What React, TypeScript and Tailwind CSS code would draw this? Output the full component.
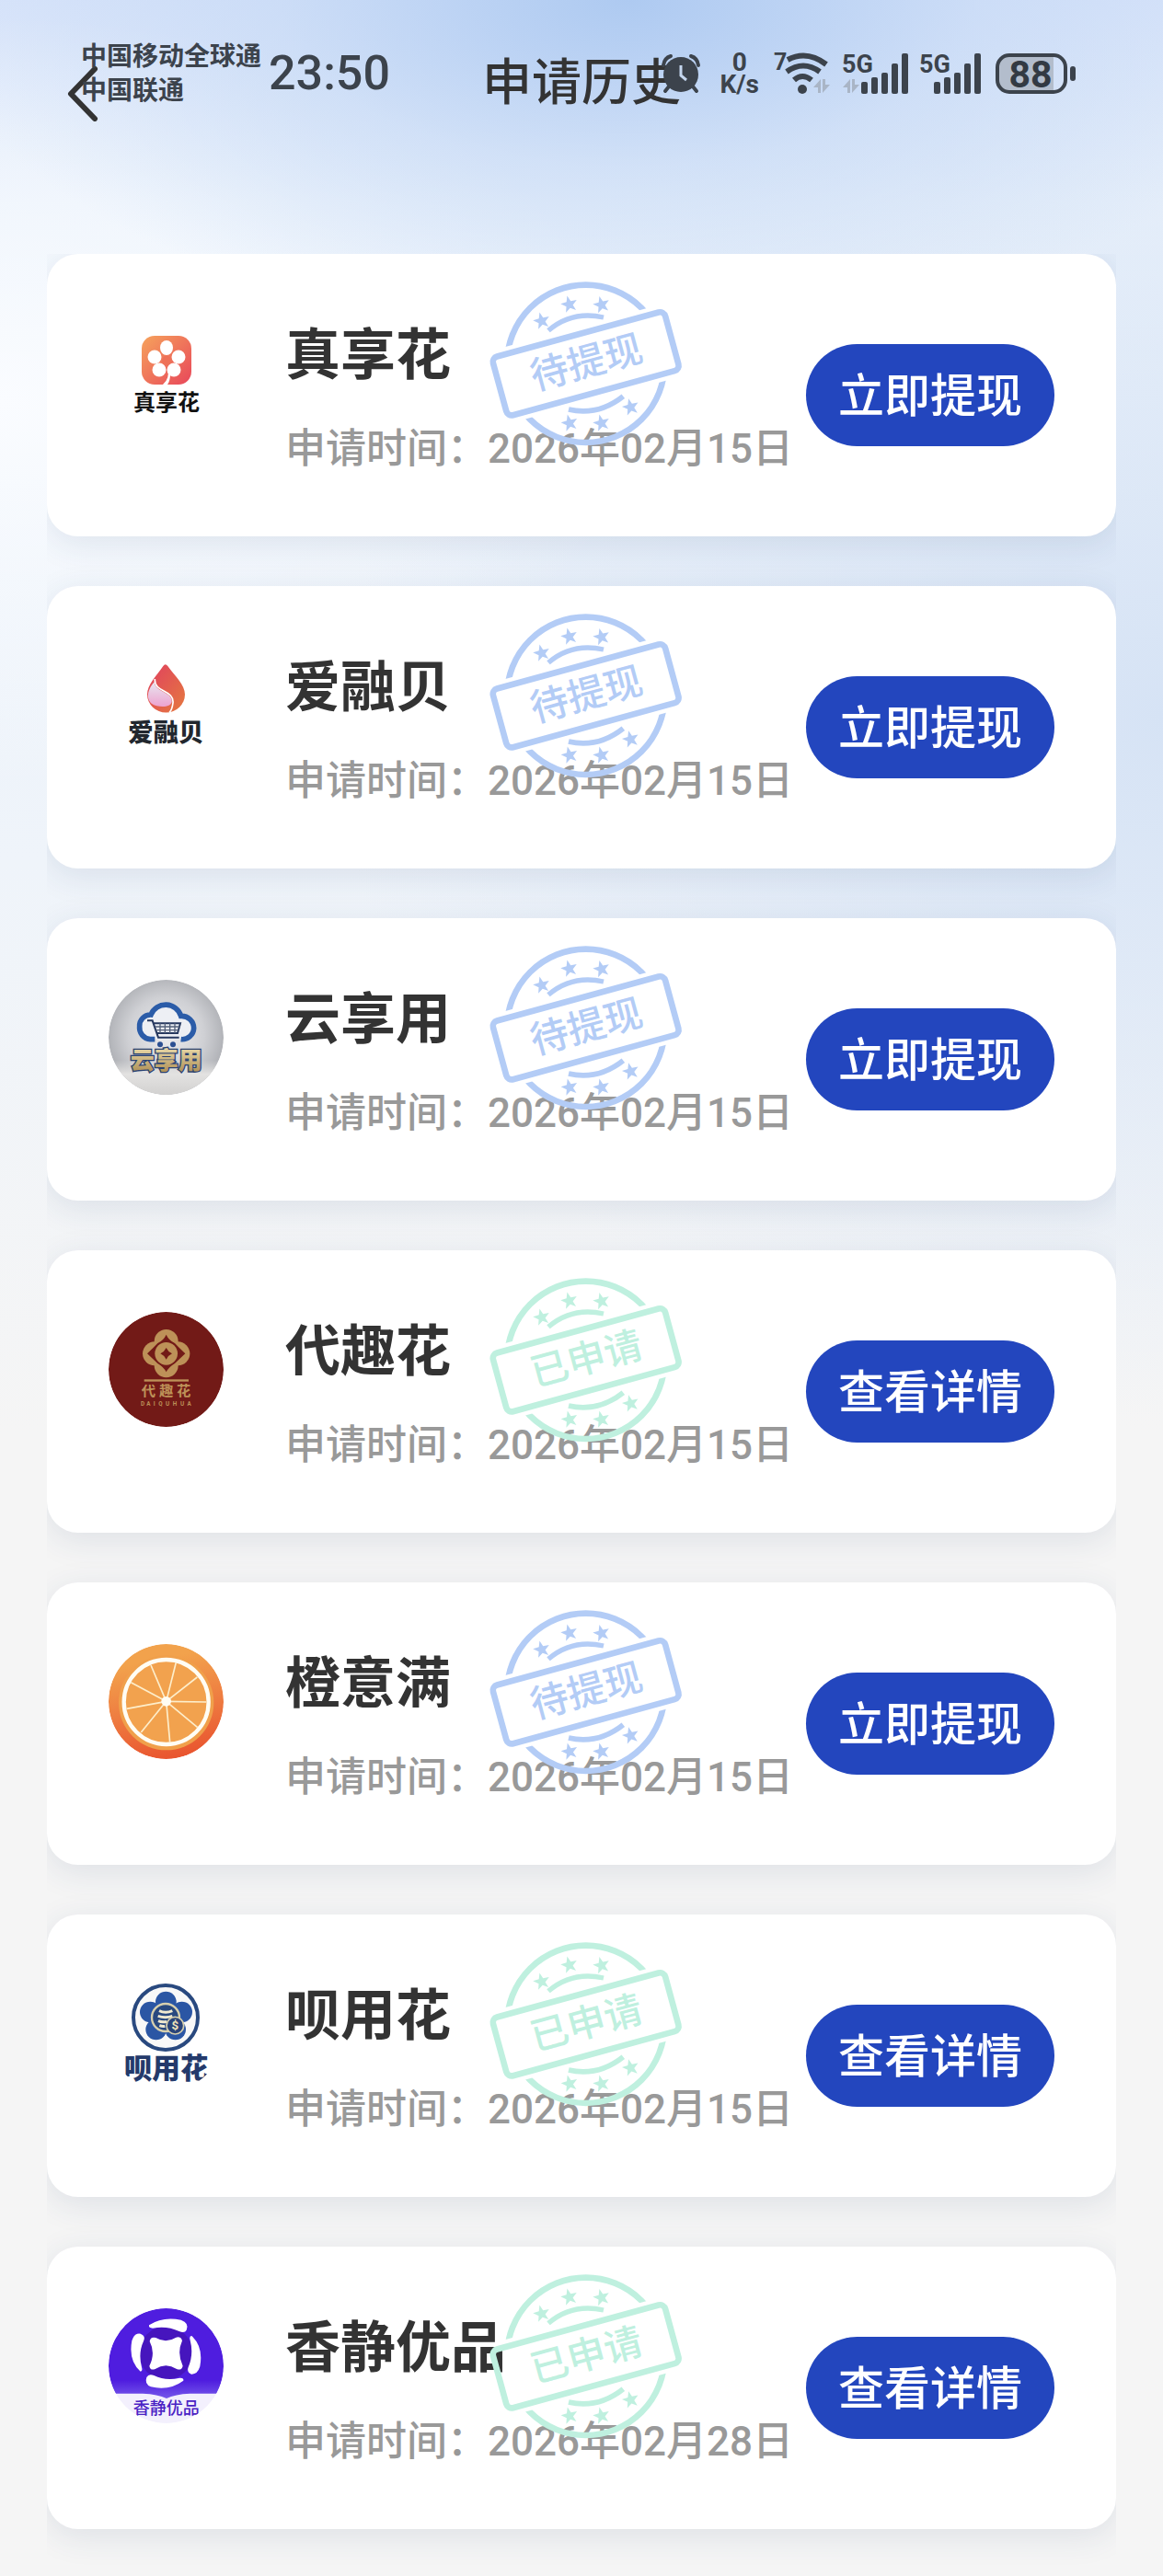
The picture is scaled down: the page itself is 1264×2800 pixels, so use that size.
import type { ReactNode } from "react";

type Status = "pending" | "applied";

type Item = {
  name: string;
  date: string;
  status: Status;
  logo: ReactNode;
};

const STATUS = {
  pending: { label: "待提现", action: "立即提现", color: "text-[#b3ccf6]" },
  applied: { label: "已申请", action: "查看详情", color: "text-[#bff0df]" },
};

const STAR = "M0-28 7-9 27-8 11 5 17 24 0 13-17 24-11 5-27-8-7-9Z";
const STARS = [
  [266, 184],
  [356, 130],
  [461, 131],
  [556, 465],
  [461, 517],
  [357, 517],
];

function Stamp({ status }: { status: Status }) {
  const { label, color } = STATUS[status];
  const maskId = `gap-${status}`;
  return (
    <svg
      viewBox="90 50 639 549"
      className={`pointer-events-none absolute left-[479px] top-7 h-[183px] w-[213px] ${color}`}
    >
      <mask id={maskId} maskUnits="userSpaceOnUse" x="90" y="50" width="640" height="550">
        <rect x="90" y="50" width="640" height="550" fill="white" />
        <rect x="90" y="202" width="640" height="244" fill="black" transform="rotate(-15.3 410 324)" />
      </mask>
      <g fill="none" stroke="currentColor" strokeWidth="20">
        <circle cx="410" cy="324" r="257" mask={`url(#${maskId})`} />
        <rect x="119" y="225" width="582" height="198" rx="18" transform="rotate(-15.3 410 324)" />
        <path d="M288 216Q365 150 468 173" strokeWidth="16" />
        <path d="M354 473Q450 495 532 430" strokeWidth="17" />
      </g>
      {STARS.map(([x, y]) => (
        <path key={`${x}-${y}`} d={STAR} fill="currentColor" transform={`translate(${x} ${y}) rotate(-14)`} />
      ))}
      <text
        x="412"
        y="363"
        textAnchor="middle"
        fontSize="124"
        fontWeight="500"
        fill="currentColor"
        transform="rotate(-15.3 412 320)"
      >
        {label}
      </text>
    </svg>
  );
}

function ZhenxianghuaLogo() {
  return (
    <svg viewBox="0 0 125 125" className="size-full">
      <defs>
        <linearGradient id="zxh" x1="0" y1="0" x2="1" y2="1">
          <stop offset="0" stopColor="#f6a35c" />
          <stop offset="1" stopColor="#e8475a" />
        </linearGradient>
      </defs>
      <rect x="36" y="22" width="54" height="53" rx="14" fill="url(#zxh)" />
      <g fill="white">
        <ellipse cx="63" cy="35" rx="7" ry="8" />
        <circle cx="50" cy="45" r="7.500" />
        <circle cx="76" cy="45" r="7.500" />
        <circle cx="55" cy="59" r="7.500" />
        <circle cx="71" cy="59" r="7.500" />
        <path d="M64 58Q67 68 59 75H64Q67 71 67 64Z" />
      </g>
      <circle cx="63" cy="49" r="5" fill="#ee7157" />
      <text x="63" y="103" textAnchor="middle" fontSize="24" fontWeight="700" fill="#111">
        真享花
      </text>
    </svg>
  );
}

function AirongbeiLogo() {
  return (
    <svg viewBox="54 44 375 375" className="size-full">
      <defs>
        <linearGradient id="arb" x1="0" y1="0" x2="1" y2="1">
          <stop offset="0" stopColor="#e0405f" />
          <stop offset="1" stopColor="#e5793f" />
        </linearGradient>
        <linearGradient id="arb-in" x1="0" y1="0" x2="0" y2="1">
          <stop offset="0" stopColor="#e8e6f0" />
          <stop offset="1" stopColor="#eda3cf" />
        </linearGradient>
      </defs>
      <path d="M232 104Q239 94 247 104C272 138 303 166 303 196A61 59 0 0 1 180 196C180 166 208 138 232 104Z" fill="url(#arb)" />
      <path d="M205 146C202 192 268 180 264 224C262 240 258 250 252 256" fill="none" stroke="white" strokeWidth="5" />
      <path d="M203 156C206 190 262 188 260 220C258 240 215 240 194 226C174 208 183 178 203 156Z" fill="url(#arb-in)" />
      <text x="241" y="350" textAnchor="middle" fontSize="82" fontWeight="900" fill="#22272e">
        爱融贝
      </text>
    </svg>
  );
}

function YunxiangyongLogo() {
  return (
    <svg viewBox="54 48 375 375" className="size-full">
      <defs>
        <radialGradient id="yxy" cx="0.5" cy="0.48" r="0.55">
          <stop offset="0" stopColor="#ececee" />
          <stop offset="0.6" stopColor="#cfd0d4" />
          <stop offset="1" stopColor="#a9abb0" />
        </radialGradient>
        <linearGradient id="yxy-floor" x1="0" y1="0" x2="0" y2="1">
          <stop offset="0.7" stopColor="#e3e2e1" stopOpacity="0" />
          <stop offset="0.82" stopColor="#e3e2e1" />
          <stop offset="1" stopColor="#d2d1d0" />
        </linearGradient>
        <linearGradient id="yxy-gold" x1="0" y1="0" x2="0" y2="1">
          <stop offset="0" stopColor="#e9d9a9" />
          <stop offset="1" stopColor="#a8884e" />
        </linearGradient>
      </defs>
      <circle cx="241.500" cy="235.500" r="187.500" fill="url(#yxy)" />
      <circle cx="241.500" cy="235.500" r="187.500" fill="url(#yxy-floor)" />
      <path
        d="M205 242H190A38 38 0 0 1 155 200A36 36 0 0 1 192 162A52 52 0 0 1 290 166A40 40 0 0 1 332 206A38 38 0 0 1 290 242"
        fill="#edeff4"
        stroke="#2b5ca8"
        strokeWidth="17"
      />
      <path d="M180 181H197L216 236H284M202 190H288L279 222H210" fill="none" stroke="#26385f" strokeWidth="6" />
      <path d="M206 201H286M208 212H282M222 190V222M238 190V222M254 190V222M270 190V222" stroke="#53607a" strokeWidth="4" />
      <circle cx="222" cy="259" r="9" fill="#2b4f91" />
      <circle cx="264" cy="259" r="9" fill="#2b4f91" />
      <text
        x="242"
        y="340"
        textAnchor="middle"
        fontSize="78"
        fontWeight="900"
        fill="url(#yxy-gold)"
        stroke="#2a4272"
        strokeWidth="8"
        paintOrder="stroke"
      >
        云享用
      </text>
    </svg>
  );
}

function DaiquhuaLogo() {
  return (
    <svg viewBox="54 48 375 375" className="size-full">
      <circle cx="241.500" cy="235.500" r="187.500" fill="#721a17" />
      <g fill="#bd9158">
        <circle cx="242" cy="144" r="39" />
        <circle cx="242" cy="223" r="39" />
        <circle cx="204" cy="184" r="39" />
        <circle cx="280" cy="184" r="39" />
      </g>
      <path d="M242 122Q250 140 270 150Q284 165 304 184Q284 203 270 216Q250 228 242 244Q234 228 214 216Q200 203 180 184Q200 165 214 150Q234 140 242 122Z" fill="#721a17" />
      <circle cx="242" cy="184" r="37" fill="#bd9158" />
      <path d="M242 165Q248 178 261 184Q248 190 242 203Q236 190 223 184Q236 178 242 165Z" fill="#721a17" />
      <rect x="170" y="268" width="145" height="7" fill="#bd9158" />
      <g fill="#bd9158" textAnchor="middle">
        <text x="184 242 299" y="322" fontSize="46" fontWeight="700">
          代趣花
        </text>
        <text x="165 184 203 223 246 270 294 317" y="355" fontSize="19" fontWeight="700">
          DAIQUHUA
        </text>
      </g>
    </svg>
  );
}

const SEAMS = [
  [343, 158],
  [373, 239],
  [344, 322],
  [254, 370],
  [160, 338],
  [113, 261],
  [127, 175],
  [192, 119],
  [274, 110],
];

function ChengyimanLogo() {
  return (
    <svg viewBox="54 50 375 375" className="size-full">
      <defs>
        <linearGradient id="cym" x1="0.3" y1="0" x2="0.5" y2="1">
          <stop offset="0.15" stopColor="#f2a24c" />
          <stop offset="0.6" stopColor="#ee7a40" />
          <stop offset="1" stopColor="#e9552f" />
        </linearGradient>
      </defs>
      <circle cx="241.500" cy="237.500" r="187.500" fill="url(#cym)" />
      <circle cx="242" cy="241" r="155" fill="#f0a04b" />
      <circle cx="242" cy="239" r="138" fill="#f2a24e" stroke="#fffdf4" strokeWidth="13" />
      {SEAMS.map(([x, y]) => (
        <line key={`${x}-${y}`} x1="242" y1="237" x2={x} y2={y} stroke="#fdeecb" strokeWidth="5" />
      ))}
      <circle cx="242" cy="237" r="16" fill="#fffdf4" />
    </svg>
  );
}

function BeiyonghuaLogo() {
  return (
    <svg viewBox="54 52 375 375" className="size-full">
      <circle cx="240" cy="187" r="105" fill="#f8f8f8" stroke="#29497f" strokeWidth="12" />
      <g fill="#2b56a4">
        <circle cx="241" cy="136" r="34" />
        <circle cx="190" cy="169" r="34" />
        <circle cx="293" cy="169" r="34" />
        <circle cx="209" cy="226" r="34" />
        <circle cx="272" cy="226" r="34" />
      </g>
      <circle cx="240" cy="187" r="45" fill="#29497f" stroke="#d6cfae" strokeWidth="7" />
      <path d="M219 165Q240 175 262 165M215 182Q240 190 262 182M216 198Q230 204 244 200M220 213Q230 217 238 215" fill="none" stroke="#efe9d0" strokeWidth="9" />
      <circle cx="271" cy="213" r="28" fill="#2a4479" stroke="#d6cfae" strokeWidth="5" />
      <text x="271" y="227" textAnchor="middle" fontSize="40" fontWeight="700" fill="#efe3b8">
        $
      </text>
      <text x="242" y="386" textAnchor="middle" fontSize="92" fontWeight="900" fill="#243a6b">
        呗用花
      </text>
    </svg>
  );
}

function XiangjingLogo() {
  return (
    <svg viewBox="54 54 375 375" className="size-full">
      <defs>
        <clipPath id="xj-clip">
          <circle cx="241.500" cy="241.500" r="187.500" />
        </clipPath>
        <linearGradient id="xj" x1="0" y1="0" x2="0" y2="1">
          <stop offset="0.8" stopColor="#4f1ddf" />
          <stop offset="1" stopColor="#7558ea" />
        </linearGradient>
      </defs>
      <g clipPath="url(#xj-clip)">
        <rect x="54" y="54" width="375" height="375" fill="#f3f0fd" />
        <path d="M54 54H429V332H320Q270 334 243 348Q215 334 165 332H54Z" fill="url(#xj)" />
      </g>
      <circle cx="241" cy="200" r="87" fill="#4615bd" />
      <g fill="white">
        <path d="M186 109Q230 80 290 92Q318 102 308 125Q302 137 284 129Q244 110 198 119Q184 119 186 109Z" />
        <path d="M298 290Q252 324 192 310Q170 301 178 279Q185 266 202 273Q240 292 286 281Q300 280 298 290Z" />
        <path d="M158 260Q118 224 130 160Q138 134 158 137Q176 144 168 161Q150 200 162 246Q166 260 158 260Z" />
        <path d="M325 144Q364 180 352 244Q344 270 324 269Q308 262 314 246Q332 204 320 158Q316 144 325 144Z" />
        <path d="M208 150Q241 170 274 149Q290 144 294 160Q276 200 296 242Q292 258 276 252Q241 230 206 252Q190 258 187 242Q208 200 188 162Q190 146 208 150Z" />
      </g>
      <text x="242" y="399" textAnchor="middle" fontSize="54" fontWeight="500" fill="#4a22c4">
        香静优品
      </text>
    </svg>
  );
}

const ITEMS: Item[] = [
  { name: "真享花", date: "2026年02月15日", status: "pending", logo: <ZhenxianghuaLogo /> },
  { name: "爱融贝", date: "2026年02月15日", status: "pending", logo: <AirongbeiLogo /> },
  { name: "云享用", date: "2026年02月15日", status: "pending", logo: <YunxiangyongLogo /> },
  { name: "代趣花", date: "2026年02月15日", status: "applied", logo: <DaiquhuaLogo /> },
  { name: "橙意满", date: "2026年02月15日", status: "pending", logo: <ChengyimanLogo /> },
  { name: "呗用花", date: "2026年02月15日", status: "applied", logo: <BeiyonghuaLogo /> },
  { name: "香静优品", date: "2026年02月28日", status: "applied", logo: <XiangjingLogo /> },
];

function AlarmIcon() {
  return (
    <svg viewBox="0 0 44 44" className="size-11 shrink-0">
      <g fill="none" stroke="#3c434c" strokeWidth="4" strokeLinecap="round">
        <path d="M3 13Q4 5 11 3M33 3Q40 5 41 13M9 36 5 41M35 36 39 41" />
      </g>
      <circle cx="22" cy="23" r="19" fill="#3c434c" />
      <path d="M22 13V24L28 29" fill="none" stroke="#c4d6ee" strokeWidth="3" />
    </svg>
  );
}

function DataArrows({ x }: { x: number }) {
  return (
    <path
      d="M0 10 8 1V16H5V10ZM10 1V16L18 7H13V1Z"
      fill="#a9b5c6"
      transform={`translate(${x} 29)`}
    />
  );
}

function WifiIcon() {
  return (
    <svg viewBox="0 0 62 48" className="h-12 w-[62px] shrink-0 overflow-visible">
      <text x="0" y="20" fontSize="25" fontWeight="700" fill="#3c434c">
        7
      </text>
      <g fill="none" stroke="#3c434c" strokeWidth="6">
        <path d="M15 9Q36-2 57 14M14 22Q32 9 50 22M22 31Q31 23 41 31" />
      </g>
      <circle cx="31" cy="41" r="5" fill="#3c434c" />
      <DataArrows x={43} />
    </svg>
  );
}

const BARS = [13, 18, 23, 33, 44];

function SignalIcon({ data = false }: { data?: boolean }) {
  return (
    <svg
      viewBox={data ? "0 0 72 48" : "0 0 67 48"}
      className={`h-12 shrink-0 overflow-visible ${data ? "w-[72px]" : "w-[67px]"}`}
    >
      <text x="0" y="23" fontSize="27" fontWeight="700" fill="#3c434c">
        5G
      </text>
      {BARS.map((h, i) => (
        <rect key={h} x={(data ? 21 : 16) + i * 11} y={46 - h} width="7" height={h} rx="2" fill="#3c434c" />
      ))}
      {data && <DataArrows x={1} />}
    </svg>
  );
}

function BatteryIcon() {
  return (
    <svg viewBox="0 0 88 44" className="h-11 w-[88px] shrink-0">
      <path d="M14 3H63V41H14Q3 41 3 30V14Q3 3 14 3Z" fill="#b3bdcc" />
      <rect x="2" y="2" width="74" height="40" rx="13" fill="none" stroke="#3c434c" strokeWidth="4" />
      <rect x="81" y="14" width="6" height="16" rx="3" fill="#3c434c" />
      <text x="38" y="37" textAnchor="middle" fontSize="41" fontWeight="700" fill="#333a43">
        88
      </text>
    </svg>
  );
}

function StatusBar() {
  return (
    <div className="absolute inset-x-0 top-0 flex h-40 items-center pl-[88px] pr-[94px] text-[#3c434c]">
      <div className="text-[28px] font-bold leading-[37px]">
        <div>中国移动全球通</div>
        <div>中国联通</div>
      </div>
      <div className="ml-2 text-[52px] font-medium leading-[60px]">23:50</div>
      <div className="ml-auto flex items-center">
        <AlarmIcon />
        <div className="ml-5 mr-4 text-center text-[28px] font-bold leading-6">
          <div>0</div>
          <div>K/s</div>
        </div>
        <WifiIcon />
        <div className="ml-3 flex items-center gap-3">
          <SignalIcon data />
          <SignalIcon />
        </div>
        <div className="ml-4">
          <BatteryIcon />
        </div>
      </div>
    </div>
  );
}

function HistoryCard({ item }: { item: Item }) {
  const { action } = STATUS[item.status];
  return (
    <li className="relative flex h-[307px] items-center rounded-[34px] bg-white px-[67px] shadow-[0_8px_36px_rgba(40,60,110,0.11)]">
      <div className="mr-[67px] mt-[67px] size-[125px] shrink-0 self-start overflow-hidden rounded-full">
        {item.logo}
      </div>
      <div className="mt-[67px] flex-1 self-start whitespace-nowrap">
        <h2 className="text-[60px] font-bold leading-[88px] text-[#333]">{item.name}</h2>
        <p className="mt-[22px] text-[44px] font-medium leading-[70px] text-[#999]">
          申请时间：<time>{item.date}</time>
        </p>
      </div>
      <button
        type="button"
        className="h-[111px] w-[270px] shrink-0 rounded-full bg-[#2346be] pt-1 text-[50px] font-medium text-white"
      >
        {action}
      </button>
      <Stamp status={item.status} />
    </li>
  );
}

export default function App() {
  return (
    <div className="relative min-h-screen bg-[#f5f5f5] font-[Roboto,'Noto_Sans_CJK_SC',sans-serif]">
      <div className="absolute inset-x-0 top-0 h-[1560px] bg-[radial-gradient(ellipse_760px_360px_at_54%_0%,#aecaf1_0%,rgba(196,216,245,0.6)_50%,transparent_100%),radial-gradient(ellipse_700px_420px_at_0%_28%,#fafcff_0%,transparent_100%),radial-gradient(ellipse_900px_760px_at_100%_50%,#d6e3f5_0%,transparent_100%),linear-gradient(to_bottom,#d8e4fa_0%,#e9f1fb_14%,#eff4fa_60%,#f5f5f5_100%)]" />
      <header className="relative flex h-[276px] items-start px-[50px] pt-[53px]">
        <button type="button" aria-label="返回" className="flex h-[98px] w-20 items-center justify-center">
          <svg viewBox="0 0 34 60" className="h-[60px] w-[34px]">
            <path d="M30 3 4 30 30 57" fill="none" stroke="#333" strokeWidth="6" strokeLinecap="round" strokeLinejoin="round" />
          </svg>
        </button>
        <h1 className="flex-1 pr-20 text-center text-[54px] font-medium leading-[76px] text-[#333]">申请历史</h1>
        <StatusBar />
      </header>
      <main className="relative mx-[51px] overflow-hidden pb-[54px]">
        <ul className="flex flex-col gap-[54px]">
          {ITEMS.map((item) => (
            <HistoryCard key={item.name} item={item} />
          ))}
        </ul>
      </main>
    </div>
  );
}
